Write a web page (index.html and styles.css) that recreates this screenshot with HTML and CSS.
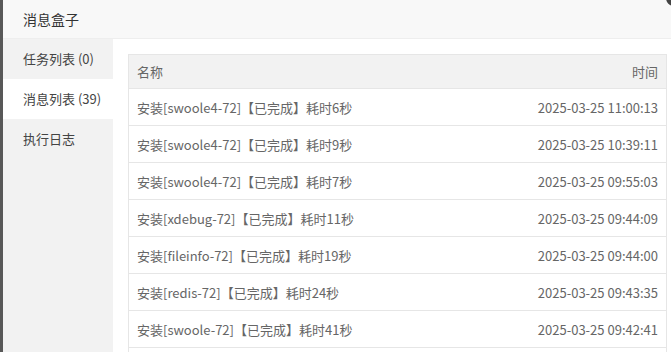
FILE: index.html
```html
<!DOCTYPE html>
<html lang="zh">
<head>
<meta charset="utf-8">
<title>消息盒子</title>
<link rel="stylesheet" href="styles.css">
</head>
<body>
<div class="backdrop">
  <div class="layer">
    <div class="layer-title">消息盒子</div>
    <div class="layer-body">
      <ul class="nav">
        <li class="nav-item">任务列表 (0)</li>
        <li class="nav-item active">消息列表 (39)</li>
        <li class="nav-item">执行日志</li>
      </ul>
      <div class="content">
        <div class="table">
          <div class="row head"><span class="c-name">名称</span><span class="c-time">时间</span></div>
          <div class="row"><span class="c-name">安装[swoole4-72]【已完成】耗时6秒</span><span class="c-time">2025-03-25 11:00:13</span></div>
          <div class="row"><span class="c-name">安装[swoole4-72]【已完成】耗时9秒</span><span class="c-time">2025-03-25 10:39:11</span></div>
          <div class="row"><span class="c-name">安装[swoole4-72]【已完成】耗时7秒</span><span class="c-time">2025-03-25 09:55:03</span></div>
          <div class="row"><span class="c-name">安装[xdebug-72]【已完成】耗时11秒</span><span class="c-time">2025-03-25 09:44:09</span></div>
          <div class="row"><span class="c-name">安装[fileinfo-72]【已完成】耗时19秒</span><span class="c-time">2025-03-25 09:44:00</span></div>
          <div class="row"><span class="c-name">安装[redis-72]【已完成】耗时24秒</span><span class="c-time">2025-03-25 09:43:35</span></div>
          <div class="row"><span class="c-name">安装[swoole-72]【已完成】耗时41秒</span><span class="c-time">2025-03-25 09:42:41</span></div>
          <div class="row"></div>
        </div>
      </div>
    </div>
    <span class="close"></span>
  </div>
</div>
</body>
</html>
```
FILE: styles.css
```css
html, body {
  margin: 0;
  padding: 0;
  height: 100%;
  overflow: hidden;
}
body {
  font-family: "Noto Sans CJK SC", "Noto Sans", sans-serif;
  font-size: 13px;
  background: #585858;
}
.backdrop {
  height: 100%;
  padding-left: 3px;
}
.layer {
  position: relative;
  width: 679px;
  height: 100%;
  background: #fff;
  display: flex;
  flex-direction: column;
}
.layer-title {
  height: 38px;
  line-height: 38px;
  padding-left: 20px;
  font-size: 14px;
  color: #333;
  background: #f8f8f8;
  border-bottom: 1px solid #eee;
  flex: none;
}
.layer-body {
  flex: 1;
  display: flex;
  min-height: 0;
}
.nav {
  list-style: none;
  margin: 0;
  padding: 0;
  width: 110px;
  background: #f2f2f2;
  flex: none;
}
.nav-item {
  height: 40px;
  line-height: 40px;
  padding-left: 20px;
  color: #444;
}
.nav-item.active {
  background: #fff;
}
.content {
  flex: 1;
  padding: 15px 15px 0 15px;
  min-width: 0;
}
.table {
  border: 1px solid #e6e6e6;
  border-bottom: none;
}
.row {
  display: flex;
  justify-content: space-between;
  align-items: center;
  height: 36px;
  padding: 0 8px;
  border-bottom: 1px solid #e6e6e6;
  color: #666;
}
.row.head {
  height: 33px;
  background: #f2f2f2;
  color: #666;
}
.close {
  position: absolute;
  top: -10px;
  right: 0;
  width: 16px;
  height: 16px;
  border-radius: 50%;
  background: #444;
}
```
